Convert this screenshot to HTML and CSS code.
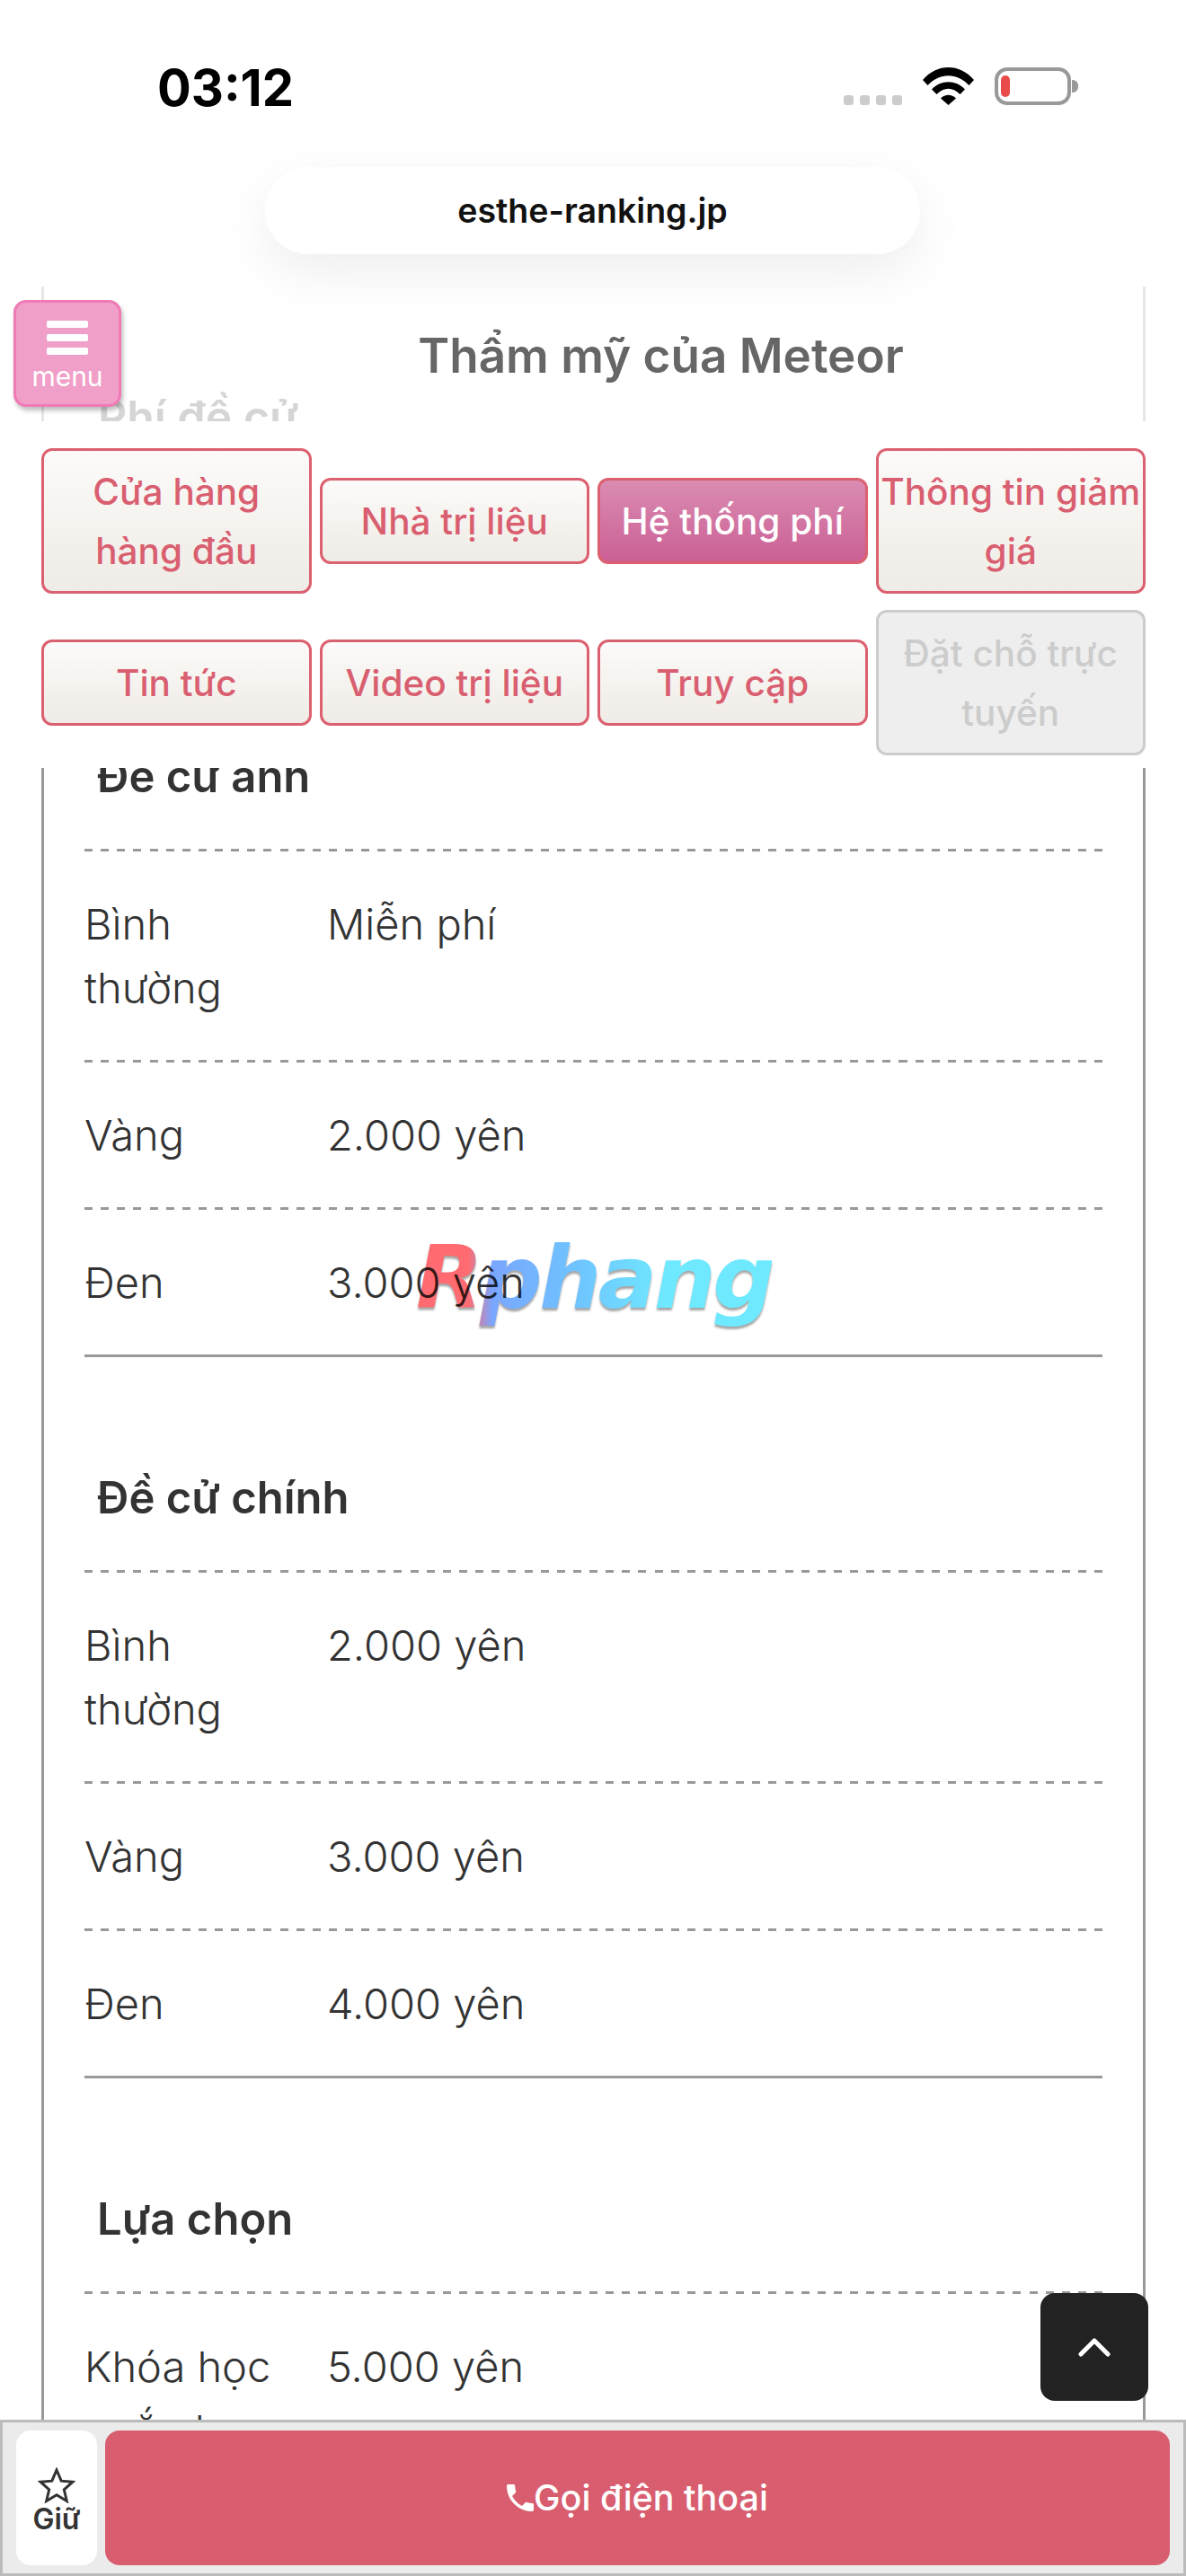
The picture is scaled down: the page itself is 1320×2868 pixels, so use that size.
FILE: index.html
```html
<!DOCTYPE html>
<html lang="vi">
<head>
    <meta charset="UTF-8">
    <meta name="viewport" content="width=device-width, initial-scale=1.0">
    <title>Thẩm mỹ của Meteor</title>
    <link rel="stylesheet" href="styles.css">
</head>
<body>
    <div class="status-bar">
        <span class="time">03:12</span>
        <div class="status-icons">
            <div class="signal"><i></i><i></i><i></i><i></i></div>
            <svg class="wifi" width="57" height="42" viewBox="0 0 57 42">
                <path d="M0 14 C16 -4.6 41 -4.6 57 14 L51.500 20 C38 5.500 19 5.500 5.500 20 Z"/>
                <path d="M10 24.500 C20 13.500 37 13.500 47 24.500 L41.500 30 C33 21.500 24 21.500 15.500 30 Z"/>
                <path d="M20 34.500 C25 29.500 32 29.500 37 34.500 L28.500 42 Z"/>
            </svg>
            <div class="battery"><div class="battery-level"></div></div>
            <div class="battery-tip"></div>
        </div>
    </div>

    <div class="url-bar">esthe-ranking.jp</div>

    <div class="shop-head">
        <h1>Thẩm mỹ của Meteor</h1>
        <h2>Phí đề cử</h2>
    </div>

    <div class="menu-btn">
        <span class="menu-bar"></span>
        <span class="menu-bar"></span>
        <span class="menu-bar"></span>
        <span class="menu-label">menu</span>
    </div>

    <nav class="nav-grid">
        <a class="nav-item">Cửa hàng<br>hàng đầu</a>
        <a class="nav-item">Nhà trị liệu</a>
        <a class="nav-item active">Hệ thống phí</a>
        <a class="nav-item">Thông tin giảm giá</a>
        <a class="nav-item">Tin tức</a>
        <a class="nav-item">Video trị liệu</a>
        <a class="nav-item">Truy cập</a>
        <a class="nav-item disabled">Đặt chỗ trực tuyến</a>
    </nav>

    <main class="content">
        <section class="price-group first">
            <h3>Đề cử anh</h3>
            <div class="price-row"><span>Bình thường</span><span>Miễn phí</span></div>
            <div class="price-row"><span>Vàng</span><span>2.000 yên</span></div>
            <div class="price-row"><span>Đen</span><span>3.000 yên</span></div>
        </section>
        <section class="price-group">
            <h3>Đề cử chính</h3>
            <div class="price-row"><span>Bình thường</span><span>2.000 yên</span></div>
            <div class="price-row"><span>Vàng</span><span>3.000 yên</span></div>
            <div class="price-row"><span>Đen</span><span>4.000 yên</span></div>
        </section>
        <section class="price-group">
            <h3>Lựa chọn</h3>
            <div class="price-row"><span>Khóa học ngắn hạn</span><span>5.000 yên</span></div>
        </section>
    </main>

    <div class="watermark">Rphang</div>

    <a class="to-top">
        <svg width="36" height="22" viewBox="0 0 36 22"><path d="M3 19 L18 4 L33 19"/></svg>
    </a>

    <footer class="call-bar">
        <a class="keep-btn">
            <svg width="42" height="40" viewBox="0 0 42 40"><path d="M21 3 L26.200 15.200 L39 16.200 L29.300 24.800 L32.300 37.500 L21 30.700 L9.700 37.500 L12.700 24.800 L3 16.200 L15.800 15.200 Z"/></svg>
            <span>Giữ</span>
        </a>
        <a class="call-btn">
            <svg width="30" height="30" viewBox="3 3 18 18"><path d="M6.600 10.800c1.400 2.800 3.800 5.100 6.600 6.600l2.200-2.200c.3-.3.7-.4 1-.2 1.100.4 2.300.6 3.600.6.600 0 1 .4 1 1V20c0 .6-.4 1-1 1C10.600 21 3 13.400 3 4c0-.6.4-1 1-1h3.500c.6 0 1 .4 1 1 0 1.300.2 2.500.6 3.600.1.300 0 .7-.2 1z"/></svg>
            <span>Gọi điện thoại</span>
        </a>
    </footer>
</body>
</html>
```

FILE: styles.css
```css
body {
    margin: 0;
    height: 2868px;
    overflow: hidden;
    background-color: #ffffff;
    font-family: Inter, "Noto Sans", sans-serif;
    color: #333333;
}

/* status bar */
.status-bar {
    display: flex;
    justify-content: space-between;
    align-items: flex-start;
    height: 186px;
    box-sizing: border-box;
    padding: 70px 120px 0 175px;
}

.time {
    font-size: 56px;
    line-height: 56px;
    font-weight: 700;
    color: #000000;
}

.status-icons {
    display: flex;
    align-items: flex-end;
    margin-top: 5px;
}

.signal {
    display: flex;
    gap: 7px;
    margin-right: 23px;
}

.signal i {
    width: 11px;
    height: 11px;
    border-radius: 3px;
    background-color: #cccccc;
}

.wifi {
    margin-right: 23px;
}

.battery {
    width: 85px;
    height: 42px;
    box-sizing: border-box;
    padding: 5px 3px;
    border: 4px solid #999999;
    border-radius: 14px;
}

.battery-level {
    width: 10px;
    height: 24px;
    border-radius: 5px;
    background-color: #e94b4b;
}

.battery-tip {
    width: 7px;
    height: 14px;
    margin: 0 0 14px 1px;
    border-radius: 0 6px 6px 0;
    background-color: #999999;
}

/* address pill */
.url-bar {
    display: flex;
    justify-content: center;
    align-items: center;
    height: 97px;
    margin: 0 296px 36px 295px;
    border-radius: 48px;
    background-color: #ffffff;
    box-shadow: 0 20px 60px rgba(0, 0, 0, 0.07);
    font-size: 37.5px;
    font-weight: 600;
    color: #111111;
}

/* faded shop heading */
.shop-head {
    height: 150px;
    overflow: hidden;
    margin: 0 45px 0 46px;
    padding: 0 60px;
    border-left: 3px solid #e6e6e6;
    border-right: 3px solid #e6e6e6;
}

h1 {
    margin: 46px 0 0 150px;
    font-size: 53px;
    line-height: 62px;
    font-weight: 600;
    text-align: center;
    color: #666666;
}

h2 {
    margin: 2px 0 0;
    font-size: 50px;
    line-height: 71px;
    font-weight: 600;
    color: #d5d5d5;
}

.menu-btn {
    position: absolute;
    left: 15px;
    top: 334px;
    display: flex;
    flex-direction: column;
    align-items: center;
    gap: 7px;
    width: 120px;
    height: 119px;
    box-sizing: border-box;
    padding-top: 20px;
    border: 3px solid #f07ab5;
    border-radius: 14px;
    background-color: #f09fc9;
    box-shadow: 2px 4px 5px rgba(0, 0, 0, 0.25);
}

.menu-bar {
    width: 46px;
    height: 8px;
    border-radius: 2px;
    background-color: #ffffff;
}

.menu-label {
    font-size: 30px;
    line-height: 34px;
    color: #ffffff;
}

/* nav buttons */
.nav-grid {
    display: grid;
    grid-template-columns: repeat(4, 1fr);
    align-items: center;
    column-gap: 9px;
    row-gap: 18px;
    padding: 30px 45px 14px 46px;
    background-color: #ffffff;
}

.nav-item {
    padding: 13px 0 11px;
    border: 3px solid #dc6170;
    border-radius: 12px;
    background: linear-gradient(#fcfbf9, #efebe6);
    font-size: 40.5px;
    line-height: 66px;
    font-weight: 500;
    text-align: center;
    color: #d95f70;
}

.nav-item.active {
    background: linear-gradient(#da8cb2, #cb5f95);
    color: #ffffff;
}

.nav-item.disabled {
    border-color: #cccccc;
    background: #eeeeee;
    color: #cccccc;
}

/* price tables */
.content {
    overflow: hidden;
    margin: 0 45px 0 46px;
    padding: 0 45px;
    border-left: 3px solid #999999;
    border-right: 3px solid #999999;
}

.price-group {
    margin-top: 118px;
    border-bottom: 3px solid #999999;
}

.price-group.first {
    margin-top: -29px;
}

h3 {
    margin: 0 0 45px;
    padding: 3px 0 0 14px;
    font-size: 49px;
    line-height: 71px;
    font-weight: 600;
}

.price-row {
    display: grid;
    grid-template-columns: 270px 1fr;
    padding: 48px 0 45px;
    background: repeating-linear-gradient(90deg, #999999 0 9px, transparent 9px 18.13px) top / 100% 3px no-repeat;
    font-size: 47px;
    line-height: 71px;
    font-weight: 300;
}

.price-row span:first-child {
    padding-right: 40px;
}

/* fixed things over the page */
.watermark {
    position: fixed;
    left: 463px;
    top: 1366px;
    font-family: "DejaVu Sans", sans-serif;
    font-size: 97px;
    line-height: 114px;
    letter-spacing: -3.5px;
    font-weight: 700;
    font-style: italic;
    background: linear-gradient(90deg, #ff6b70 0, #ff6b70 58px, #7aa6ff 85px, #6fc1ff 170px, #6fe9ff 280px);
    -webkit-background-clip: text;
    background-clip: text;
    color: transparent;
    mix-blend-mode: multiply;
    filter: drop-shadow(0 3px 1px rgba(0, 0, 0, 0.35));
}

.to-top {
    position: fixed;
    left: 1158px;
    top: 2553px;
    display: flex;
    justify-content: center;
    align-items: center;
    width: 120px;
    height: 120px;
    border-radius: 16px;
    background-color: #222222;
}

.to-top svg {
    fill: none;
    stroke: #ffffff;
    stroke-width: 5;
    stroke-linecap: round;
    stroke-linejoin: round;
}

.call-bar {
    position: fixed;
    left: 0;
    right: 0;
    bottom: 0;
    display: flex;
    gap: 9px;
    height: 174px;
    box-sizing: border-box;
    padding: 9px 15px 9px 15px;
    border: 3px solid #bbbbbb;
    background-color: #ebebeb;
}

.keep-btn {
    display: flex;
    flex-direction: column;
    align-items: center;
    justify-content: center;
    width: 90px;
    padding-top: 8px;
    border-radius: 16px;
    background-color: #ffffff;
    font-size: 32px;
    line-height: 36px;
    font-weight: 600;
}

.keep-btn svg {
    fill: none;
    stroke: #333333;
    stroke-width: 3;
    stroke-linejoin: miter;
}

.call-btn {
    display: flex;
    flex: 1;
    justify-content: center;
    align-items: center;
    border-radius: 16px;
    background-color: #d85e6f;
    font-size: 39.5px;
    font-weight: 500;
    color: #ffffff;
}

.call-btn svg {
    fill: #ffffff;
}
```
